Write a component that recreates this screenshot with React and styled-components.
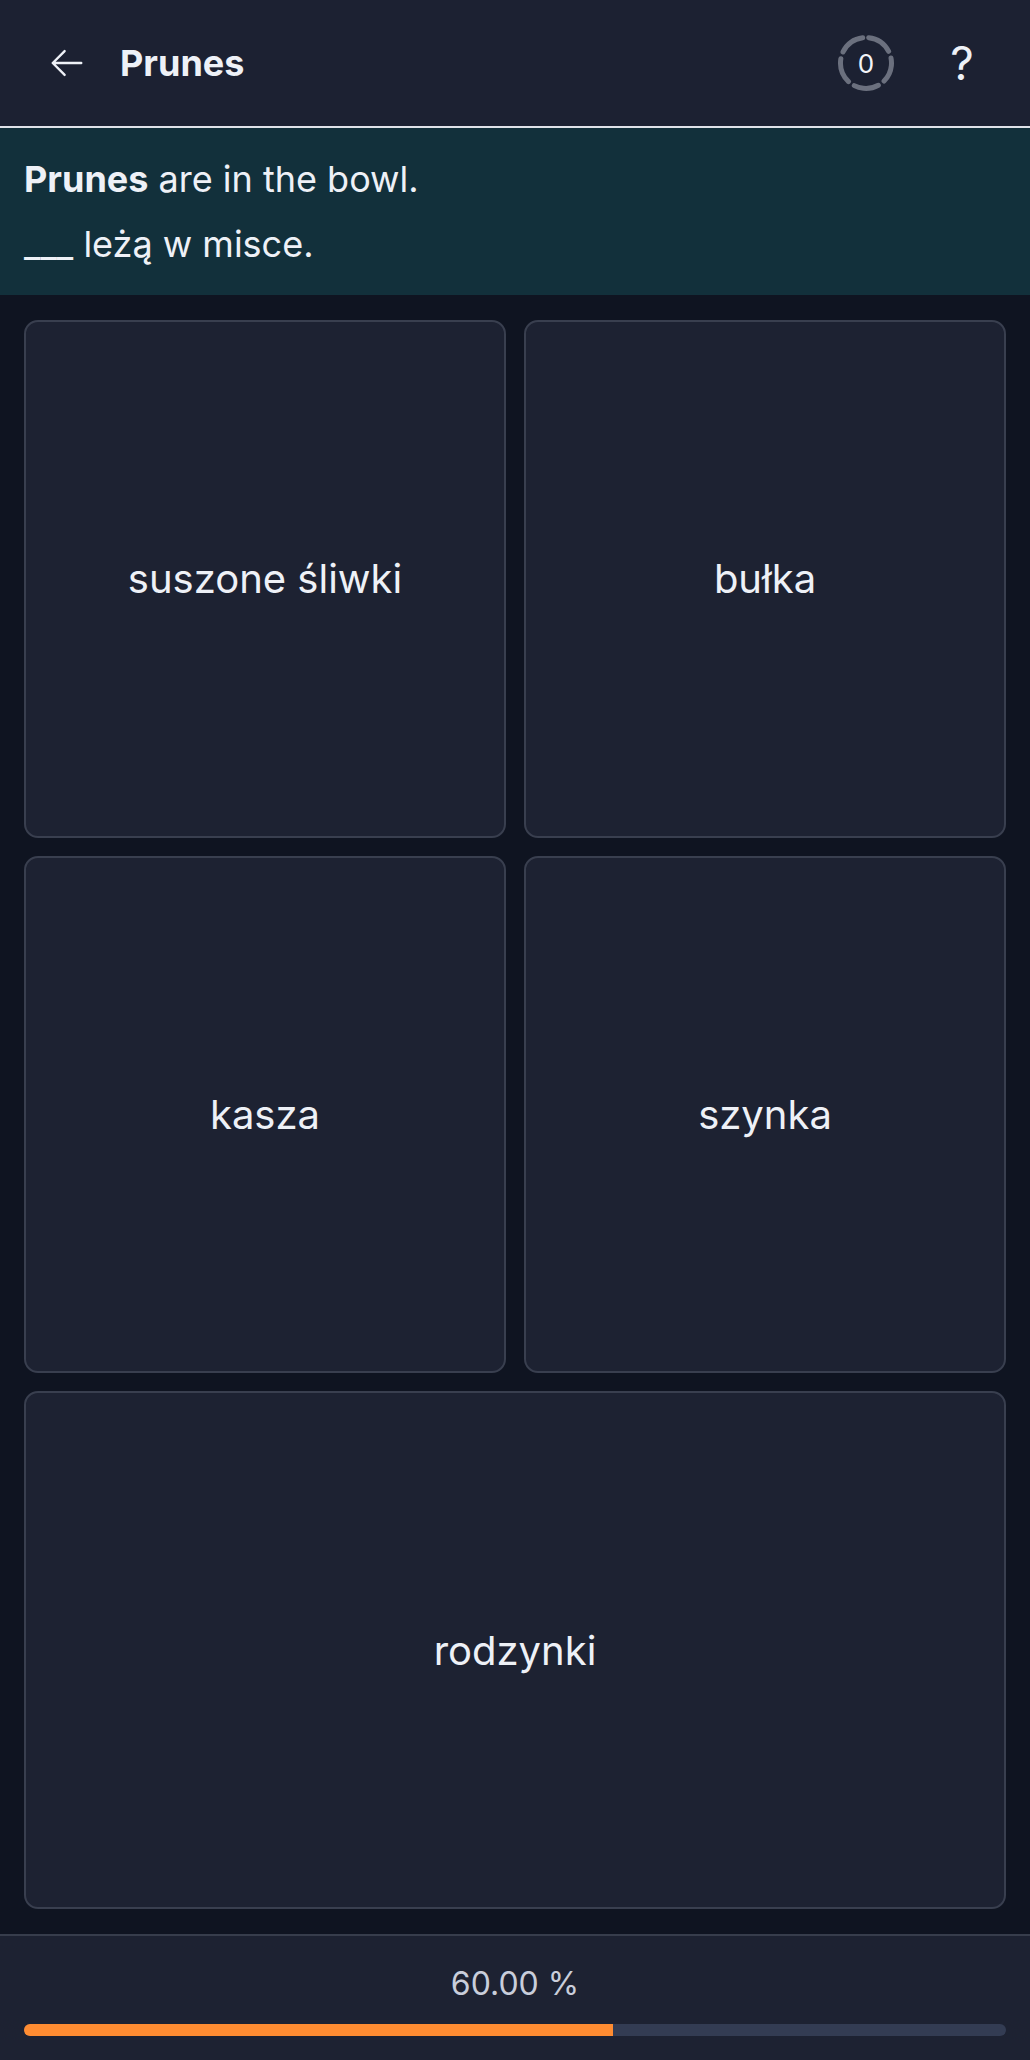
import styled, { createGlobalStyle } from "styled-components";

const GlobalStyle = createGlobalStyle`
	* {
		box-sizing: border-box;
	}
	html, body {
		margin: 0;
		padding: 0;
		background: #0f1421;
	}
	body {
		font-family: Inter, "Noto Sans", "Liberation Sans", sans-serif;
		color: #eef1f7;
	}
	#root {
		min-height: 100vh;
		display: flex;
		flex-direction: column;
	}
`;

const options = [
	{ id: 1, text: "suszone śliwki" },
	{ id: 2, text: "bułka" },
	{ id: 3, text: "kasza" },
	{ id: 4, text: "szynka" },
	{ id: 5, text: "rodzynki", wide: true },
];

const progress = 60;

export default function App() {
	return (
		<>
			<GlobalStyle />
			<Page>
				<Header>
					<HeaderLeft>
						<IconButton aria-label="back">
							<svg width="38" height="38" viewBox="0 0 24 24" fill="none" stroke="currentColor" strokeWidth="1.5" strokeLinecap="round" strokeLinejoin="round">
								<path d="M10.5 19.5 3 12m0 0 7.5-7.5M3 12h18" />
							</svg>
						</IconButton>
						<Title>Prunes</Title>
					</HeaderLeft>
					<HeaderRight>
						<Counter>
							<svg width="58" height="58" viewBox="0 0 58 58">
								<circle
									cx="29"
									cy="29"
									r="25.5"
									fill="none"
									stroke="#6b707e"
									strokeWidth="5"
									strokeLinecap="round"
									strokeDasharray="25 7.04"
									transform="rotate(-84 29 29)"
								/>
							</svg>
							<span>0</span>
						</Counter>
						<Help>?</Help>
					</HeaderRight>
				</Header>

				<Prompt>
					<p>
						<b>Prunes</b> are in the bowl.
					</p>
					<p>___ leżą w misce.</p>
				</Prompt>

				<Board>
					{options.map((option) => (
						<Card key={option.id} $wide={option.wide}>
							{option.text}
						</Card>
					))}
				</Board>

				<Footer>
					<Percent>{progress.toFixed(2)} %</Percent>
					<Track>
						<Fill style={{ width: `${progress}%` }} />
					</Track>
				</Footer>
			</Page>
		</>
	);
}

const Page = styled.div`
	flex: 1;
	display: flex;
	flex-direction: column;
	min-height: 100vh;
`;

const Header = styled.header`
	height: 128px;
	display: flex;
	align-items: center;
	justify-content: space-between;
	padding: 0 44px 0 48px;
	background: #1c2132;
	border-bottom: 2px solid #dfe2e8;
`;

const HeaderLeft = styled.div`
	display: flex;
	align-items: center;
	gap: 34px;
`;

const IconButton = styled.button`
	display: flex;
	align-items: center;
	justify-content: center;
	padding: 0;
	border: none;
	background: none;
	color: #eef1f7;
	cursor: pointer;
`;

const Title = styled.h1`
	margin: 0;
	font-size: 36px;
	font-weight: 700;
	color: #eef1f7;
`;

const HeaderRight = styled.div`
	display: flex;
	align-items: center;
	gap: 43px;
`;

const Counter = styled.div`
	position: relative;
	width: 58px;
	height: 58px;
	display: flex;
	align-items: center;
	justify-content: center;

	svg {
		position: absolute;
		inset: 0;
	}

	span {
		font-size: 26px;
		color: #f3f4f8;
	}
`;

const Help = styled.span`
	width: 48px;
	text-align: center;
	font-size: 46px;
	line-height: 1;
	color: #eef1f7;
`;

const Prompt = styled.section`
	background: #12303b;
	padding: 26px 24px 25px;
	display: flex;
	flex-direction: column;
	gap: 14px;

	p {
		margin: 0;
		font-size: 36px;
		line-height: 51px;
		color: #eef1f7;
	}

	b {
		font-weight: 700;
	}
`;

const Board = styled.main`
	flex: 1;
	display: grid;
	grid-template-columns: 1fr 1fr;
	grid-template-rows: repeat(3, 1fr);
	gap: 18px;
	padding: 25px 24px;
	background: #0f1421;
`;

const Card = styled.div`
	grid-column: ${(props) => (props.$wide ? "1 / span 2" : "auto")};
	display: flex;
	align-items: center;
	justify-content: center;
	background: #1d2232;
	border: 2px solid #393f4f;
	border-radius: 14px;
	font-size: 40px;
	color: #eef1f7;
	cursor: pointer;
`;

const Footer = styled.footer`
	background: #1d2232;
	border-top: 2px solid #373d4c;
	padding: 24px 24px;
	display: flex;
	flex-direction: column;
	align-items: center;
	gap: 16px;
`;

const Percent = styled.div`
	font-size: 32px;
	line-height: 48px;
	color: #c9cedb;
`;

const Track = styled.div`
	width: 100%;
	height: 12px;
	border-radius: 6px;
	background: #333c53;
	overflow: hidden;
`;

const Fill = styled.div`
	height: 100%;
	background: #ff8c32;
`;
